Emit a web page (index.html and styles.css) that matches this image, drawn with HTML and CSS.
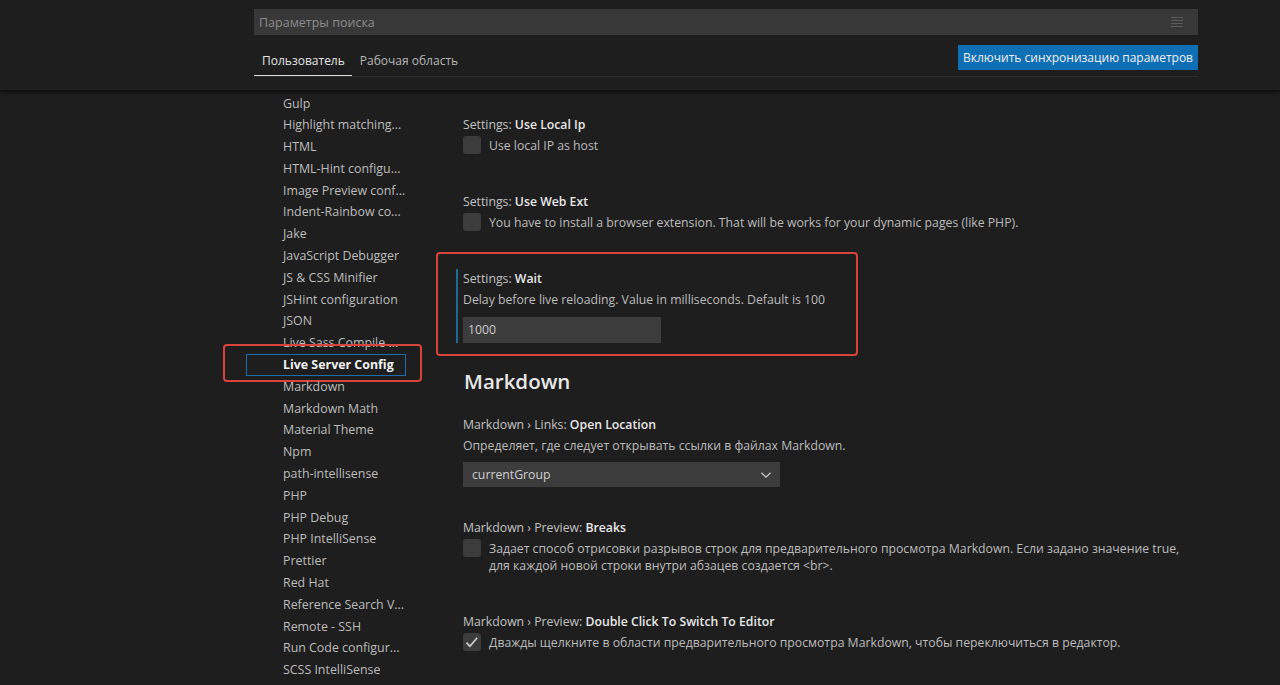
FILE: index.html
```html
<!DOCTYPE html>
<html lang="ru">
<head>
<meta charset="utf-8">
<title>Параметры</title>
<link rel="stylesheet" href="styles.css">
</head>
<body>
<header class="header">
  <div class="header-inner">
    <div class="search">
      <span class="placeholder">Параметры поиска</span>
      <svg class="filter" width="14" height="12" viewBox="0 0 14 12"><path d="M1 1.5h12M1 4.5h12M1 7.5h12M1 10.5h12" stroke="#5c5c5c" stroke-width="1.2"/></svg>
    </div>
    <div class="tabs-row">
      <div class="tabs">
        <span class="tab active">Пользователь</span>
        <span class="tab">Рабочая область</span>
      </div>
      <button class="sync">Включить синхронизацию параметров</button>
    </div>
  </div>
</header>
<div class="body">
  <nav class="toc">
    <div class="toc-row">Gulp</div>
    <div class="toc-row">Highlight matching...</div>
    <div class="toc-row">HTML</div>
    <div class="toc-row">HTML-Hint configu...</div>
    <div class="toc-row">Image Preview conf...</div>
    <div class="toc-row">Indent-Rainbow co...</div>
    <div class="toc-row">Jake</div>
    <div class="toc-row">JavaScript Debugger</div>
    <div class="toc-row">JS &amp; CSS Minifier</div>
    <div class="toc-row">JSHint configuration</div>
    <div class="toc-row">JSON</div>
    <div class="toc-row">Live Sass Compile ...</div>
    <div class="toc-row selected">Live Server Config<span class="annot toc-annot"></span></div>
    <div class="toc-row">Markdown</div>
    <div class="toc-row">Markdown Math</div>
    <div class="toc-row">Material Theme</div>
    <div class="toc-row">Npm</div>
    <div class="toc-row">path-intellisense</div>
    <div class="toc-row">PHP</div>
    <div class="toc-row">PHP Debug</div>
    <div class="toc-row">PHP IntelliSense</div>
    <div class="toc-row">Prettier</div>
    <div class="toc-row">Red Hat</div>
    <div class="toc-row">Reference Search V...</div>
    <div class="toc-row">Remote - SSH</div>
    <div class="toc-row">Run Code configur...</div>
    <div class="toc-row">SCSS IntelliSense</div>
  </nav>
  <main class="settings">
    <section class="item">
      <div class="item-inner">
        <div class="title">Settings: <b>Use Local Ip</b></div>
        <div class="check"><span class="box"></span><span class="check-text">Use local IP as host</span></div>
      </div>
    </section>
    <section class="item">
      <div class="item-inner">
        <div class="title">Settings: <b>Use Web Ext</b></div>
        <div class="check"><span class="box"></span><span class="check-text">You have to install a browser extension. That will be works for your dynamic pages (like PHP).</span></div>
      </div>
    </section>
    <section class="item">
      <div class="item-inner focused">
        <div class="title">Settings: <b>Wait</b></div>
        <div class="desc">Delay before live reloading. Value in milliseconds. Default is 100</div>
        <div class="input">1000</div>
      </div>
      <span class="annot item-annot"></span>
    </section>
    <h2 class="group">Markdown</h2>
    <section class="item">
      <div class="item-inner">
        <div class="title">Markdown › Links: <b>Open Location</b></div>
        <div class="desc">Определяет, где следует открывать ссылки в файлах Markdown.</div>
        <div class="select"><span>currentGroup</span>
          <svg width="12" height="8" viewBox="0 0 12 8"><path d="M1.5 1.8l4.5 4.4 4.5-4.4" fill="none" stroke="#c8c8c8" stroke-width="1.3"/></svg>
        </div>
      </div>
    </section>
    <section class="item">
      <div class="item-inner">
        <div class="title">Markdown › Preview: <b>Breaks</b></div>
        <div class="check"><span class="box"></span><span class="check-text">Задает способ отрисовки разрывов строк для предварительного просмотра Markdown. Если задано значение true, для каждой новой строки внутри абзацев создается &lt;br&gt;.</span></div>
      </div>
    </section>
    <section class="item">
      <div class="item-inner">
        <div class="title">Markdown › Preview: <b>Double Click To Switch To Editor</b></div>
        <div class="check"><span class="box"><svg width="18" height="18" viewBox="0 0 18 18"><path d="M3.5 9.6l3.4 3.6 7.3-8.4" fill="none" stroke="#d4d4d4" stroke-width="1.6"/></svg></span><span class="check-text">Дважды щелкните в области предварительного просмотра Markdown, чтобы переключиться в редактор.</span></div>
      </div>
    </section>
  </main>
</div>
</body>
</html>
```
FILE: styles.css
```css
html, body {
  margin: 0;
  padding: 0;
  height: 100%;
  overflow: hidden;
}
body {
  background: #1e1e1e;
  color: #cccccc;
  font-family: "Open Sans", "Noto Sans", sans-serif;
  font-size: 12.25px;
}
.header {
  height: 90px;
  background: #1e1e1e;
  box-shadow: 0 1px 4px 1px #0c0c0c;
  position: relative;
  z-index: 1;
}
.header-inner {
  margin-left: 254px;
  width: 944px;
  padding-top: 9px;
}
.search {
  height: 26px;
  background: #383838;
  display: flex;
  align-items: center;
  justify-content: space-between;
  padding: 0 14px 0 5px;
}
.placeholder {
  color: #8c8c8c;
  font-size: 12.5px;
}
.tabs-row {
  margin-top: 10px;
  display: flex;
  justify-content: space-between;
  align-items: flex-start;
  border-bottom: 1px solid #2e2e2e;
}
.tabs {
  display: flex;
}
.tab {
  padding: 1px 7px 0 8px;
  line-height: 29px;
  color: #b8b8b8;
  font-size: 12px;
  border-bottom: 1px solid transparent;
}
.tab.active {
  color: #e4e4e4;
  border-bottom-color: #d8d8d8;
}
.sync {
  height: 25px;
  padding: 0 5px;
  border: none;
  background: #0f6fb4;
  color: #f0f0f0;
  font-family: inherit;
  font-size: 12px;
  font-weight: 500;
}
.body {
  display: flex;
  margin-left: 246px;
  width: 952px;
}
.toc {
  width: 160px;
  flex-shrink: 0;
  padding-top: 2.5px;
}
.toc-row {
  position: relative;
  height: 21.8px;
  line-height: 21.8px;
  padding-left: 37px;
  color: #bdbdbd;
  white-space: nowrap;
  font-size: 12.4px;
}
.toc-row.selected {
  color: #f2f2f2;
  font-weight: 700;
  outline: 1px solid #1d6ea8;
  outline-offset: -1px;
}
.annot {
  position: absolute;
  border: 2.5px solid #d8433c;
  border-radius: 4px;
  box-sizing: border-box;
  pointer-events: none;
}
.toc-annot {
  left: -23px;
  top: -10px;
  width: 199px;
  height: 38px;
}
.settings {
  flex: 1;
  padding-left: 30px;
  padding-top: 13px;
}
.item {
  position: relative;
  padding: 12px 12px 19px 20px;
}
.item-inner {
  padding-left: 7px;
}
.item-inner.focused {
  border-left: 2px solid #1c6a97;
  padding-left: 5px;
}
.item-annot {
  left: 0;
  top: -5px;
  width: 422px;
  height: 104px;
}
.title {
  padding-top: 1px;
  line-height: 18px;
  color: #c2c2c2;
}
.title b {
  color: #e8e8e8;
  font-weight: 600;
}
.desc {
  margin-top: 2px;
  padding-top: 1px;
  line-height: 18px;
  color: #bcbcbc;
}
.check {
  display: flex;
  gap: 8px;
  margin-top: 2px;
  padding-bottom: 7px;
}
.box {
  width: 18px;
  height: 18px;
  flex-shrink: 0;
  background: #3c3c3c;
  border-radius: 3px;
  display: block;
}
.box svg {
  display: block;
}
.check-text {
  padding-top: 1px;
  line-height: 17px;
  color: #bcbcbc;
}
.input {
  margin-top: 8px;
  width: 198px;
  height: 26px;
  line-height: 26px;
  padding-left: 5px;
  box-sizing: border-box;
  background: #3c3c3c;
  color: #cccccc;
}
.select {
  margin-top: 7px;
  width: 317px;
  height: 25px;
  box-sizing: border-box;
  padding: 0 8px 0 9px;
  background: #3c3c3c;
  color: #d0d0d0;
  display: flex;
  align-items: center;
  justify-content: space-between;
}
.group {
  margin: 0;
  padding: 5px 0 8px 28px;
  font-size: 20.5px;
  line-height: 28px;
  font-weight: 600;
  color: #e8e8e8;
}
```
